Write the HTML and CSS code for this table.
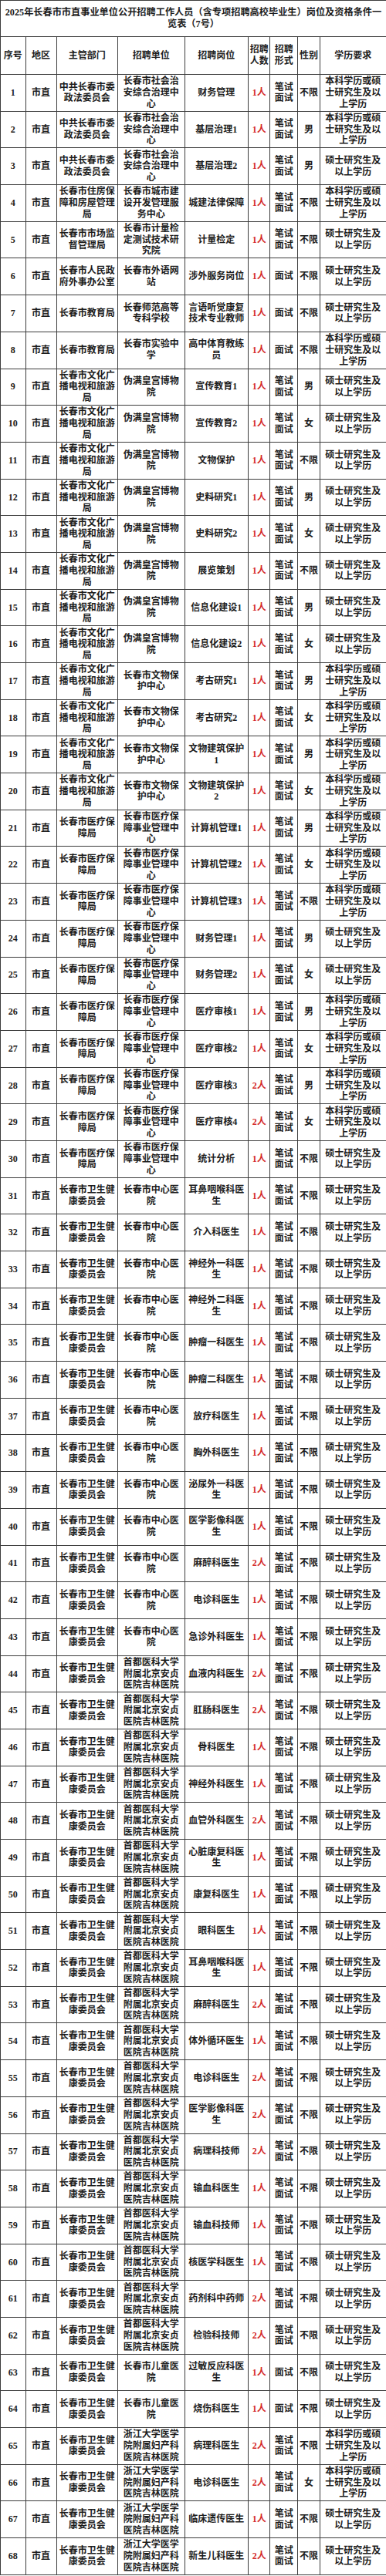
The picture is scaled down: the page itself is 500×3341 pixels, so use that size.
FILE: index.html
```html
<!DOCTYPE html>
<html lang="zh-CN">
<head>
<meta charset="utf-8">
<title>2025年长春市市直事业单位公开招聘工作人员岗位及资格条件一览表（7号）</title>
<link rel="stylesheet" href="styles.css">
</head>
<body>
<table class="sheet">
<colgroup>
<col class="c-no"><col class="c-area"><col class="c-dept"><col class="c-unit"><col class="c-post"><col class="c-num"><col class="c-form"><col class="c-sex"><col class="c-edu">
</colgroup>
<thead>
<tr class="title-row"><th colspan="9" class="title">2025年长春市市直事业单位公开招聘工作人员（含专项招聘高校毕业生）岗位及资格条件一<br>览表（7号）</th></tr>
<tr class="head-row"><th>序号</th><th>地区</th><th>主管部门</th><th>招聘单位</th><th>招聘岗位</th><th class="nar">招聘<br>人数</th><th class="nar">招聘<br>形式</th><th class="nar">性别</th><th>学历要求</th></tr>
</thead>
<tbody>
<tr><td>1</td><td>市直</td><td>中共长春市委政法委员会</td><td>长春市社会治安综合治理中心</td><td>财务管理</td><td class="num">1人</td><td class="nar">笔试<br>面试</td><td class="nar">不限</td><td>本科学历或硕士研究生及以上学历</td></tr>
<tr><td>2</td><td>市直</td><td>中共长春市委政法委员会</td><td>长春市社会治安综合治理中心</td><td>基层治理1</td><td class="num">1人</td><td class="nar">笔试<br>面试</td><td class="nar">男</td><td>本科学历或硕士研究生及以上学历</td></tr>
<tr><td>3</td><td>市直</td><td>中共长春市委政法委员会</td><td>长春市社会治安综合治理中心</td><td>基层治理2</td><td class="num">1人</td><td class="nar">笔试<br>面试</td><td class="nar">男</td><td>硕士研究生及以上学历</td></tr>
<tr><td>4</td><td>市直</td><td>长春市住房保障和房屋管理局</td><td>长春市城市建设开发管理服务中心</td><td>城建法律保障</td><td class="num">1人</td><td class="nar">笔试<br>面试</td><td class="nar">不限</td><td>本科学历或硕士研究生及以上学历</td></tr>
<tr><td>5</td><td>市直</td><td>长春市市场监督管理局</td><td>长春市计量检定测试技术研究院</td><td>计量检定</td><td class="num">1人</td><td class="nar">笔试<br>面试</td><td class="nar">不限</td><td>硕士研究生及以上学历</td></tr>
<tr><td>6</td><td>市直</td><td>长春市人民政府外事办公室</td><td>长春市外语网站</td><td>涉外服务岗位</td><td class="num">1人</td><td class="nar">面试</td><td class="nar">不限</td><td>硕士研究生及以上学历</td></tr>
<tr><td>7</td><td>市直</td><td>长春市教育局</td><td>长春师范高等专科学校</td><td>言语听觉康复技术专业教师</td><td class="num">1人</td><td class="nar">面试</td><td class="nar">不限</td><td>硕士研究生及以上学历</td></tr>
<tr><td>8</td><td>市直</td><td>长春市教育局</td><td>长春市实验中学</td><td>高中体育教练员</td><td class="num">1人</td><td class="nar">面试</td><td class="nar">不限</td><td>本科学历或硕士研究生及以上学历</td></tr>
<tr><td>9</td><td>市直</td><td>长春市文化广播电视和旅游局</td><td>伪满皇宫博物院</td><td>宣传教育1</td><td class="num">1人</td><td class="nar">笔试<br>面试</td><td class="nar">男</td><td>硕士研究生及以上学历</td></tr>
<tr><td>10</td><td>市直</td><td>长春市文化广播电视和旅游局</td><td>伪满皇宫博物院</td><td>宣传教育2</td><td class="num">1人</td><td class="nar">笔试<br>面试</td><td class="nar">女</td><td>硕士研究生及以上学历</td></tr>
<tr><td>11</td><td>市直</td><td>长春市文化广播电视和旅游局</td><td>伪满皇宫博物院</td><td>文物保护</td><td class="num">1人</td><td class="nar">笔试<br>面试</td><td class="nar">不限</td><td>硕士研究生及以上学历</td></tr>
<tr><td>12</td><td>市直</td><td>长春市文化广播电视和旅游局</td><td>伪满皇宫博物院</td><td>史料研究1</td><td class="num">1人</td><td class="nar">笔试<br>面试</td><td class="nar">男</td><td>硕士研究生及以上学历</td></tr>
<tr><td>13</td><td>市直</td><td>长春市文化广播电视和旅游局</td><td>伪满皇宫博物院</td><td>史料研究2</td><td class="num">1人</td><td class="nar">笔试<br>面试</td><td class="nar">女</td><td>硕士研究生及以上学历</td></tr>
<tr><td>14</td><td>市直</td><td>长春市文化广播电视和旅游局</td><td>伪满皇宫博物院</td><td>展览策划</td><td class="num">1人</td><td class="nar">笔试<br>面试</td><td class="nar">不限</td><td>硕士研究生及以上学历</td></tr>
<tr><td>15</td><td>市直</td><td>长春市文化广播电视和旅游局</td><td>伪满皇宫博物院</td><td>信息化建设1</td><td class="num">1人</td><td class="nar">笔试<br>面试</td><td class="nar">男</td><td>硕士研究生及以上学历</td></tr>
<tr><td>16</td><td>市直</td><td>长春市文化广播电视和旅游局</td><td>伪满皇宫博物院</td><td>信息化建设2</td><td class="num">1人</td><td class="nar">笔试<br>面试</td><td class="nar">女</td><td>硕士研究生及以上学历</td></tr>
<tr><td>17</td><td>市直</td><td>长春市文化广播电视和旅游局</td><td>长春市文物保护中心</td><td>考古研究1</td><td class="num">1人</td><td class="nar">笔试<br>面试</td><td class="nar">男</td><td>本科学历或硕士研究生及以上学历</td></tr>
<tr><td>18</td><td>市直</td><td>长春市文化广播电视和旅游局</td><td>长春市文物保护中心</td><td>考古研究2</td><td class="num">1人</td><td class="nar">笔试<br>面试</td><td class="nar">女</td><td>本科学历或硕士研究生及以上学历</td></tr>
<tr><td>19</td><td>市直</td><td>长春市文化广播电视和旅游局</td><td>长春市文物保护中心</td><td>文物建筑保护1</td><td class="num">1人</td><td class="nar">笔试<br>面试</td><td class="nar">男</td><td>本科学历或硕士研究生及以上学历</td></tr>
<tr><td>20</td><td>市直</td><td>长春市文化广播电视和旅游局</td><td>长春市文物保护中心</td><td>文物建筑保护2</td><td class="num">1人</td><td class="nar">笔试<br>面试</td><td class="nar">女</td><td>本科学历或硕士研究生及以上学历</td></tr>
<tr><td>21</td><td>市直</td><td>长春市医疗保障局</td><td>长春市医疗保障事业管理中心</td><td>计算机管理1</td><td class="num">1人</td><td class="nar">笔试<br>面试</td><td class="nar">男</td><td>本科学历或硕士研究生及以上学历</td></tr>
<tr><td>22</td><td>市直</td><td>长春市医疗保障局</td><td>长春市医疗保障事业管理中心</td><td>计算机管理2</td><td class="num">1人</td><td class="nar">笔试<br>面试</td><td class="nar">女</td><td>本科学历或硕士研究生及以上学历</td></tr>
<tr><td>23</td><td>市直</td><td>长春市医疗保障局</td><td>长春市医疗保障事业管理中心</td><td>计算机管理3</td><td class="num">1人</td><td class="nar">笔试<br>面试</td><td class="nar">不限</td><td>本科学历或硕士研究生及以上学历</td></tr>
<tr><td>24</td><td>市直</td><td>长春市医疗保障局</td><td>长春市医疗保障事业管理中心</td><td>财务管理1</td><td class="num">1人</td><td class="nar">笔试<br>面试</td><td class="nar">男</td><td>硕士研究生及以上学历</td></tr>
<tr><td>25</td><td>市直</td><td>长春市医疗保障局</td><td>长春市医疗保障事业管理中心</td><td>财务管理2</td><td class="num">1人</td><td class="nar">笔试<br>面试</td><td class="nar">女</td><td>硕士研究生及以上学历</td></tr>
<tr><td>26</td><td>市直</td><td>长春市医疗保障局</td><td>长春市医疗保障事业管理中心</td><td>医疗审核1</td><td class="num">1人</td><td class="nar">笔试<br>面试</td><td class="nar">男</td><td>本科学历或硕士研究生及以上学历</td></tr>
<tr><td>27</td><td>市直</td><td>长春市医疗保障局</td><td>长春市医疗保障事业管理中心</td><td>医疗审核2</td><td class="num">1人</td><td class="nar">笔试<br>面试</td><td class="nar">女</td><td>本科学历或硕士研究生及以上学历</td></tr>
<tr><td>28</td><td>市直</td><td>长春市医疗保障局</td><td>长春市医疗保障事业管理中心</td><td>医疗审核3</td><td class="num">2人</td><td class="nar">笔试<br>面试</td><td class="nar">男</td><td>本科学历或硕士研究生及以上学历</td></tr>
<tr><td>29</td><td>市直</td><td>长春市医疗保障局</td><td>长春市医疗保障事业管理中心</td><td>医疗审核4</td><td class="num">2人</td><td class="nar">笔试<br>面试</td><td class="nar">女</td><td>本科学历或硕士研究生及以上学历</td></tr>
<tr><td>30</td><td>市直</td><td>长春市医疗保障局</td><td>长春市医疗保障事业管理中心</td><td>统计分析</td><td class="num">1人</td><td class="nar">笔试<br>面试</td><td class="nar">不限</td><td>硕士研究生及以上学历</td></tr>
<tr><td>31</td><td>市直</td><td>长春市卫生健康委员会</td><td>长春市中心医院</td><td>耳鼻咽喉科医生</td><td class="num">1人</td><td class="nar">笔试<br>面试</td><td class="nar">不限</td><td>硕士研究生及以上学历</td></tr>
<tr><td>32</td><td>市直</td><td>长春市卫生健康委员会</td><td>长春市中心医院</td><td>介入科医生</td><td class="num">1人</td><td class="nar">笔试<br>面试</td><td class="nar">不限</td><td>硕士研究生及以上学历</td></tr>
<tr><td>33</td><td>市直</td><td>长春市卫生健康委员会</td><td>长春市中心医院</td><td>神经外一科医生</td><td class="num">1人</td><td class="nar">笔试<br>面试</td><td class="nar">不限</td><td>硕士研究生及以上学历</td></tr>
<tr><td>34</td><td>市直</td><td>长春市卫生健康委员会</td><td>长春市中心医院</td><td>神经外二科医生</td><td class="num">1人</td><td class="nar">笔试<br>面试</td><td class="nar">不限</td><td>硕士研究生及以上学历</td></tr>
<tr><td>35</td><td>市直</td><td>长春市卫生健康委员会</td><td>长春市中心医院</td><td>肿瘤一科医生</td><td class="num">1人</td><td class="nar">笔试<br>面试</td><td class="nar">不限</td><td>硕士研究生及以上学历</td></tr>
<tr><td>36</td><td>市直</td><td>长春市卫生健康委员会</td><td>长春市中心医院</td><td>肿瘤二科医生</td><td class="num">1人</td><td class="nar">笔试<br>面试</td><td class="nar">不限</td><td>硕士研究生及以上学历</td></tr>
<tr><td>37</td><td>市直</td><td>长春市卫生健康委员会</td><td>长春市中心医院</td><td>放疗科医生</td><td class="num">1人</td><td class="nar">笔试<br>面试</td><td class="nar">不限</td><td>硕士研究生及以上学历</td></tr>
<tr><td>38</td><td>市直</td><td>长春市卫生健康委员会</td><td>长春市中心医院</td><td>胸外科医生</td><td class="num">1人</td><td class="nar">笔试<br>面试</td><td class="nar">不限</td><td>硕士研究生及以上学历</td></tr>
<tr><td>39</td><td>市直</td><td>长春市卫生健康委员会</td><td>长春市中心医院</td><td>泌尿外一科医生</td><td class="num">1人</td><td class="nar">笔试<br>面试</td><td class="nar">不限</td><td>硕士研究生及以上学历</td></tr>
<tr><td>40</td><td>市直</td><td>长春市卫生健康委员会</td><td>长春市中心医院</td><td>医学影像科医生</td><td class="num">1人</td><td class="nar">笔试<br>面试</td><td class="nar">不限</td><td>硕士研究生及以上学历</td></tr>
<tr><td>41</td><td>市直</td><td>长春市卫生健康委员会</td><td>长春市中心医院</td><td>麻醉科医生</td><td class="num">2人</td><td class="nar">笔试<br>面试</td><td class="nar">不限</td><td>硕士研究生及以上学历</td></tr>
<tr><td>42</td><td>市直</td><td>长春市卫生健康委员会</td><td>长春市中心医院</td><td>电诊科医生</td><td class="num">1人</td><td class="nar">笔试<br>面试</td><td class="nar">不限</td><td>硕士研究生及以上学历</td></tr>
<tr><td>43</td><td>市直</td><td>长春市卫生健康委员会</td><td>长春市中心医院</td><td>急诊外科医生</td><td class="num">1人</td><td class="nar">笔试<br>面试</td><td class="nar">不限</td><td>硕士研究生及以上学历</td></tr>
<tr><td>44</td><td>市直</td><td>长春市卫生健康委员会</td><td>首都医科大学附属北京安贞医院吉林医院</td><td>血液内科医生</td><td class="num">2人</td><td class="nar">笔试<br>面试</td><td class="nar">不限</td><td>硕士研究生及以上学历</td></tr>
<tr><td>45</td><td>市直</td><td>长春市卫生健康委员会</td><td>首都医科大学附属北京安贞医院吉林医院</td><td>肛肠科医生</td><td class="num">2人</td><td class="nar">笔试<br>面试</td><td class="nar">不限</td><td>硕士研究生及以上学历</td></tr>
<tr><td>46</td><td>市直</td><td>长春市卫生健康委员会</td><td>首都医科大学附属北京安贞医院吉林医院</td><td>骨科医生</td><td class="num">1人</td><td class="nar">笔试<br>面试</td><td class="nar">不限</td><td>硕士研究生及以上学历</td></tr>
<tr><td>47</td><td>市直</td><td>长春市卫生健康委员会</td><td>首都医科大学附属北京安贞医院吉林医院</td><td>神经外科医生</td><td class="num">1人</td><td class="nar">笔试<br>面试</td><td class="nar">不限</td><td>硕士研究生及以上学历</td></tr>
<tr><td>48</td><td>市直</td><td>长春市卫生健康委员会</td><td>首都医科大学附属北京安贞医院吉林医院</td><td>血管外科医生</td><td class="num">2人</td><td class="nar">笔试<br>面试</td><td class="nar">不限</td><td>硕士研究生及以上学历</td></tr>
<tr><td>49</td><td>市直</td><td>长春市卫生健康委员会</td><td>首都医科大学附属北京安贞医院吉林医院</td><td>心脏康复科医生</td><td class="num">1人</td><td class="nar">笔试<br>面试</td><td class="nar">不限</td><td>硕士研究生及以上学历</td></tr>
<tr><td>50</td><td>市直</td><td>长春市卫生健康委员会</td><td>首都医科大学附属北京安贞医院吉林医院</td><td>康复科医生</td><td class="num">1人</td><td class="nar">笔试<br>面试</td><td class="nar">不限</td><td>硕士研究生及以上学历</td></tr>
<tr><td>51</td><td>市直</td><td>长春市卫生健康委员会</td><td>首都医科大学附属北京安贞医院吉林医院</td><td>眼科医生</td><td class="num">1人</td><td class="nar">笔试<br>面试</td><td class="nar">不限</td><td>硕士研究生及以上学历</td></tr>
<tr><td>52</td><td>市直</td><td>长春市卫生健康委员会</td><td>首都医科大学附属北京安贞医院吉林医院</td><td>耳鼻咽喉科医生</td><td class="num">1人</td><td class="nar">笔试<br>面试</td><td class="nar">不限</td><td>硕士研究生及以上学历</td></tr>
<tr><td>53</td><td>市直</td><td>长春市卫生健康委员会</td><td>首都医科大学附属北京安贞医院吉林医院</td><td>麻醉科医生</td><td class="num">2人</td><td class="nar">笔试<br>面试</td><td class="nar">不限</td><td>硕士研究生及以上学历</td></tr>
<tr><td>54</td><td>市直</td><td>长春市卫生健康委员会</td><td>首都医科大学附属北京安贞医院吉林医院</td><td>体外循环医生</td><td class="num">1人</td><td class="nar">笔试<br>面试</td><td class="nar">不限</td><td>硕士研究生及以上学历</td></tr>
<tr><td>55</td><td>市直</td><td>长春市卫生健康委员会</td><td>首都医科大学附属北京安贞医院吉林医院</td><td>电诊科医生</td><td class="num">2人</td><td class="nar">笔试<br>面试</td><td class="nar">不限</td><td>硕士研究生及以上学历</td></tr>
<tr><td>56</td><td>市直</td><td>长春市卫生健康委员会</td><td>首都医科大学附属北京安贞医院吉林医院</td><td>医学影像科医生</td><td class="num">2人</td><td class="nar">笔试<br>面试</td><td class="nar">不限</td><td>硕士研究生及以上学历</td></tr>
<tr><td>57</td><td>市直</td><td>长春市卫生健康委员会</td><td>首都医科大学附属北京安贞医院吉林医院</td><td>病理科技师</td><td class="num">2人</td><td class="nar">笔试<br>面试</td><td class="nar">不限</td><td>硕士研究生及以上学历</td></tr>
<tr><td>58</td><td>市直</td><td>长春市卫生健康委员会</td><td>首都医科大学附属北京安贞医院吉林医院</td><td>输血科医生</td><td class="num">1人</td><td class="nar">笔试<br>面试</td><td class="nar">不限</td><td>硕士研究生及以上学历</td></tr>
<tr><td>59</td><td>市直</td><td>长春市卫生健康委员会</td><td>首都医科大学附属北京安贞医院吉林医院</td><td>输血科技师</td><td class="num">1人</td><td class="nar">笔试<br>面试</td><td class="nar">不限</td><td>硕士研究生及以上学历</td></tr>
<tr><td>60</td><td>市直</td><td>长春市卫生健康委员会</td><td>首都医科大学附属北京安贞医院吉林医院</td><td>核医学科医生</td><td class="num">1人</td><td class="nar">笔试<br>面试</td><td class="nar">不限</td><td>硕士研究生及以上学历</td></tr>
<tr><td>61</td><td>市直</td><td>长春市卫生健康委员会</td><td>首都医科大学附属北京安贞医院吉林医院</td><td>药剂科中药师</td><td class="num">2人</td><td class="nar">笔试<br>面试</td><td class="nar">不限</td><td>硕士研究生及以上学历</td></tr>
<tr><td>62</td><td>市直</td><td>长春市卫生健康委员会</td><td>首都医科大学附属北京安贞医院吉林医院</td><td>检验科技师</td><td class="num">2人</td><td class="nar">笔试<br>面试</td><td class="nar">不限</td><td>硕士研究生及以上学历</td></tr>
<tr><td>63</td><td>市直</td><td>长春市卫生健康委员会</td><td>长春市儿童医院</td><td>过敏反应科医生</td><td class="num">1人</td><td class="nar">面试</td><td class="nar">不限</td><td>硕士研究生及以上学历</td></tr>
<tr><td>64</td><td>市直</td><td>长春市卫生健康委员会</td><td>长春市儿童医院</td><td>烧伤科医生</td><td class="num">1人</td><td class="nar">面试</td><td class="nar">不限</td><td>硕士研究生及以上学历</td></tr>
<tr><td>65</td><td>市直</td><td>长春市卫生健康委员会</td><td>浙江大学医学院附属妇产科医院吉林医院</td><td>病理科医生</td><td class="num">2人</td><td class="nar">笔试<br>面试</td><td class="nar">不限</td><td>本科学历或硕士研究生及以上学历</td></tr>
<tr><td>66</td><td>市直</td><td>长春市卫生健康委员会</td><td>浙江大学医学院附属妇产科医院吉林医院</td><td>电诊科医生</td><td class="num">2人</td><td class="nar">笔试<br>面试</td><td class="nar">女</td><td>本科学历或硕士研究生及以上学历</td></tr>
<tr><td>67</td><td>市直</td><td>长春市卫生健康委员会</td><td>浙江大学医学院附属妇产科医院吉林医院</td><td>临床遗传医生</td><td class="num">1人</td><td class="nar">笔试<br>面试</td><td class="nar">不限</td><td>硕士研究生及以上学历</td></tr>
<tr><td>68</td><td>市直</td><td>长春市卫生健康委员会</td><td>浙江大学医学院附属妇产科医院吉林医院</td><td>新生儿科医生</td><td class="num">2人</td><td class="nar">笔试<br>面试</td><td class="nar">不限</td><td>硕士研究生及以上学历</td></tr>
</tbody>
</table>
</body>
</html>
```
FILE: styles.css
```css
html, body {
  margin: 0;
  padding: 0;
  background: #ffffff;
}

.sheet {
  width: 500px;
  border-collapse: collapse;
  table-layout: fixed;
  font-family: "Liberation Serif", "Noto Sans CJK SC", serif;
  font-weight: 700;
  font-size: 12px;
  line-height: 14.7px;
  color: #1c1c1c;
  text-align: center;
}

.c-no { width: 32.5px; }
.c-area { width: 40.2px; }
.c-dept { width: 79px; }
.c-unit { width: 87px; }
.c-post { width: 82.3px; }
.c-num { width: 28.3px; }
.c-form { width: 36px; }
.c-sex { width: 28.4px; }
.c-edu { width: 86.3px; }

.sheet th,
.sheet td {
  border: 1px solid #3c3c3c;
  padding: 0 2px;
  vertical-align: middle;
  font-weight: 700;
  overflow: hidden;
}

.sheet .nar {
  padding: 0;
}

.title-row {
  height: 47px;
}

.title {
  font-size: 12.2px;
  line-height: 15px;
  padding: 0;
  white-space: nowrap;
}

.head-row {
  height: 49px;
}

.head-row th {
  font-size: 12px;
}

.sheet tbody tr {
  height: 47.7px;
}

.num {
  color: #d42a2a;
}
```
